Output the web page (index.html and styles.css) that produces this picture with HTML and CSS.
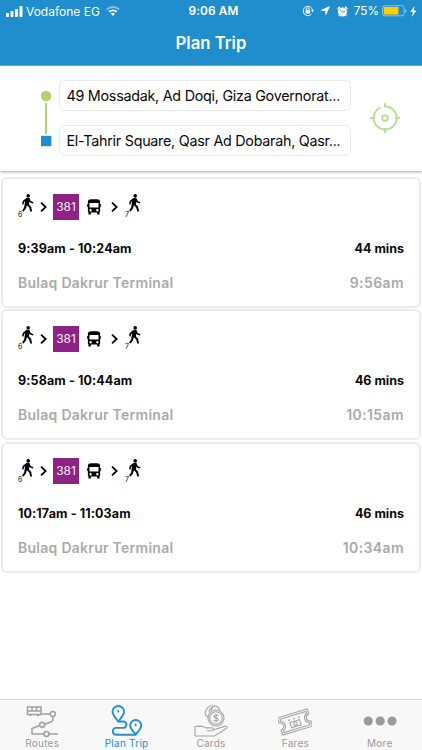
FILE: index.html
```
<!DOCTYPE html>
<html lang="en">
<head>
<meta charset="utf-8">
<title>Plan Trip</title>
<link rel="stylesheet" href="styles.css">
</head>
<body>
<svg class="defs" width="0" height="0">
  <symbol id="walk" viewBox="0 0 12 18">
    <circle cx="6.200" cy="1.900" r="1.800"/>
    <path d="M4.400 4.100h3L8.700 6.900l2.800 1.300-.6 1.400L7.500 8.200l-.3-.6-.2 3 2.100 2.100 1 4.900H8.200l-1-4.100-2.300-2.200-1 3.200L1.600 17.600.1 16.700l2.100-3.400.9-6-1 .8-.5 2.300-1.500-.2.6-3.300z"/>
  </symbol>
  <symbol id="chev" viewBox="0 0 7 10"><path d="M1 .7 5.700 5 1 9.300" fill="none" stroke="#000" stroke-width="1.700"/></symbol>
  <symbol id="bus" viewBox="0 0 14 16">
    <path fill-rule="evenodd" d="M2.800.6C5 0 9 0 11.200.6c1.300.3 1.900 1.100 1.900 2.200V5h.7v3h-.7v5h-.5v2a.5.500 0 0 1-.5.500h-1.500a.5.500 0 0 1-.5-.5v-1.500H3.900V15a.5.500 0 0 1-.5.500H1.900a.5.500 0 0 1-.5-.5v-2H.9V8H.2V5h.7V2.800C.9 1.700 1.500.9 2.800.6zM2.500 4v4.400h9V4zM3.600 10a1.200 1.200 0 1 0 0 2.400 1.200 1.200 0 0 0 0-2.400zM10.400 10a1.200 1.200 0 1 0 0 2.400 1.200 1.200 0 0 0 0-2.400z"/>
  </symbol>
</svg>

<header class="top">
  <div class="status">
    <div class="carrier">
      <svg width="17" height="11" viewBox="0 0 17 11" fill="#fff"><rect x="0" y="7" width="3" height="4" rx=".8"/><rect x="4.500" y="5" width="3" height="6" rx=".8"/><rect x="9" y="3" width="3" height="8" rx=".8"/><rect x="13.500" y="0" width="3" height="11" rx=".8"/></svg>
      <span class="carrier-name">Vodafone EG</span>
      <svg class="wifi" width="14" height="10" viewBox="0 0 14 10" fill="none" stroke="#fff" stroke-width="1.900"><path d="M.9 3.500a8.700 8.700 0 0 1 12.200 0" opacity=".45"/><path d="M3.200 5.900a5.400 5.400 0 0 1 7.600 0"/><path d="M4.800 7.600 7 10l2.200-2.400a3.400 3.400 0 0 0-4.400 0z" fill="#fff" stroke="none"/></svg>
    </div>
    <div class="clock">9:06 AM</div>
    <div class="indicators">
      <svg width="12" height="12" viewBox="0 0 12 12" fill="none" stroke="#fff"><path d="M9.300 9.300A4.700 4.700 0 1 1 10.600 5.500"/><path d="M8.900 5.200h3.100l-1.500 2z" fill="#fff" stroke="none"/><rect x="3.500" y="5.200" width="4.600" height="3.400" fill="#fff" stroke="none"/><path d="M4.400 5.300V4.200a1.400 1.400 0 0 1 2.800 0v1.100"/></svg>
      <svg class="loc" width="10" height="10" viewBox="0 0 10 10" fill="#fff"><path d="M10 0 5.700 9.800 5.200 5 0 4.500z"/></svg>
      <svg class="alarm" width="11" height="11" viewBox="0 0 11 11"><circle cx="5.500" cy="6" r="4.600" fill="#fff"/><path d="M.5 2.900 2.900.7M10.500 2.900 8.100.7M2.200 9.300 1.700 10M8.800 9.300l.5.700" stroke="#fff" stroke-width="1.300"/><path d="M3.500 4.200 5.500 6.200 8 5.400" fill="none" stroke="#208ecd"/></svg>
      <span class="percent">75%</span>
      <svg width="25" height="12" viewBox="0 0 26 12"><rect x=".5" y=".5" width="22.500" height="10.500" rx="2.200" fill="none" stroke="#8dc5e5"/><rect x="1.800" y="1.800" width="15.300" height="7.900" fill="#fc0"/><path d="M24.200 4v4q1.300-.5 1.300-2t-1.300-2z" fill="#8dc5e5"/></svg>
      <svg class="bolt" width="7" height="11" viewBox="0 0 7 11" fill="#fff"><path d="M4.400 0 .3 6h2.500l-1 5L6.400 4.500H3.800z"/></svg>
    </div>
  </div>
  <h1>Plan Trip</h1>
</header>

<section class="search">
  <svg class="route" width="12" height="76" viewBox="0 0 12 76"><circle cx="6" cy="16" r="5.200" fill="#afd469"/><path d="M6 23v31" stroke="#afd469" stroke-width="2"/><rect x="1" y="55.800" width="10.400" height="10.400" fill="#208ecd"/></svg>
  <div class="fields">
    <div class="field"><span class="from">49 Mossadak, Ad Doqi, Giza Governorat...</span></div>
    <div class="field"><span class="to">El-Tahrir Square, Qasr Ad Dobarah, Qasr...</span></div>
  </div>
  <svg class="target" width="32" height="32" viewBox="0 0 32 32" fill="none" stroke="#b5df91" stroke-width="1.900"><path d="M11.500 5.500A11.500 11.500 0 1 0 16 4.500"/><path d="M16 1v4.500M26 16h5M16 26v5M1 16h5"/><circle cx="16" cy="16" r="2.800"/></svg>
</section>

<main class="trips">
  <article class="trip">
    <div class="legs">
      <div class="walk"><span>6</span><svg width="12" height="18"><use href="#walk"/></svg></div>
      <svg class="chev" width="7" height="10"><use href="#chev"/></svg>
      <span class="line">381</span>
      <svg class="bus" width="14" height="16"><use href="#bus"/></svg>
      <svg class="chev2" width="7" height="10"><use href="#chev"/></svg>
      <div class="walk"><span>7</span><svg width="12" height="18"><use href="#walk"/></svg></div>
    </div>
    <div class="times"><span>9:39am - 10:24am</span><span class="duration">44 mins</span></div>
    <div class="stop"><span>Bulaq Dakrur Terminal</span><span class="arrival">9:56am</span></div>
  </article>
  <article class="trip">
    <div class="legs">
      <div class="walk"><span>6</span><svg width="12" height="18"><use href="#walk"/></svg></div>
      <svg class="chev" width="7" height="10"><use href="#chev"/></svg>
      <span class="line">381</span>
      <svg class="bus" width="14" height="16"><use href="#bus"/></svg>
      <svg class="chev2" width="7" height="10"><use href="#chev"/></svg>
      <div class="walk"><span>7</span><svg width="12" height="18"><use href="#walk"/></svg></div>
    </div>
    <div class="times"><span>9:58am - 10:44am</span><span class="duration">46 mins</span></div>
    <div class="stop"><span>Bulaq Dakrur Terminal</span><span class="arrival">10:15am</span></div>
  </article>
  <article class="trip">
    <div class="legs">
      <div class="walk"><span>6</span><svg width="12" height="18"><use href="#walk"/></svg></div>
      <svg class="chev" width="7" height="10"><use href="#chev"/></svg>
      <span class="line">381</span>
      <svg class="bus" width="14" height="16"><use href="#bus"/></svg>
      <svg class="chev2" width="7" height="10"><use href="#chev"/></svg>
      <div class="walk"><span>7</span><svg width="12" height="18"><use href="#walk"/></svg></div>
    </div>
    <div class="times"><span>10:17am - 11:03am</span><span class="duration">46 mins</span></div>
    <div class="stop"><span>Bulaq Dakrur Terminal</span><span class="arrival">10:34am</span></div>
  </article>
</main>

<nav class="tabs">
  <a class="tab">
    <svg width="34" height="34" viewBox="0 0 34 34" fill="none" stroke="#a0a0a0" stroke-width="1.500"><path d="M2.500 3h13.500v7.500H2.500zM2.500 7H16M7 3v4M11.500 3v4"/><path d="M5.500 10.500v1.500M13 10.500v1.500" stroke-width="2"/><path d="M16 10h9.300M27.800 12.500v4L26 18l-6.500 2.200M14.700 21.500 7 24.500V30h12M24 30h9"/><circle cx="27.800" cy="10" r="2.500"/><circle cx="17.200" cy="20.800" r="2.500"/><circle cx="21.500" cy="30" r="2.500"/></svg>
    <span>Routes</span>
  </a>
  <a class="tab active">
    <svg width="34" height="34" viewBox="0 0 34 34" fill="none" stroke="#238fcd" stroke-width="1.900"><path d="M8.300 17.500C5 13.500 2.500 10 2.500 7.800a5.800 5.800 0 0 1 11.600 0c0 2.200-2.500 5.700-5.800 9.700z"/><path d="M25.700 30.500c-3.300-3.700-5.600-6.700-5.600-8.900a5.600 5.600 0 0 1 11.200 0c0 2.200-2.300 5.200-5.600 8.900z"/><path d="M8.300 17.500h5a3.200 3.200 0 0 1 0 6.400H6.200a3.400 3.400 0 0 0 0 6.900h19.500"/><path d="M8.300 6v2.500M25.700 19.700v2.500" stroke-width="1.600"/></svg>
    <span>Plan Trip</span>
  </a>
  <a class="tab">
    <svg width="34" height="34" viewBox="0 0 34 34" fill="none" stroke="#a4a4a4" stroke-width="1.100"><circle cx="22" cy="14" r="8"/><circle cx="22" cy="14" r="6.300"/><path d="M13.800 13a5 5 0 0 1-.8-8.400 5 5 0 0 1 6.500-2.300 5 5 0 0 1 6.300 4.500M15.500 8.500a3 3 0 0 1 2-4.300M19.500 2.300a4.700 4.700 0 0 0-2.300 4.500"/><path d="M24.300 11.800c-.6-1-4.300-1.300-4.300.7s4.300 1 4.300 3-4 1.700-4.600.4M22.100 9.800v8.500"/><path d="M1 22.500l6-.4c2 0 3.500 1.800 5.500 1.800h5.300c2.500 0 2 2.900 0 2.900h-5M18.800 26l11.700-3.600c3-.8 3.300 1.300 1.300 2.300L20.500 32H1M1 22.500V32"/></svg>
    <span>Cards</span>
  </a>
  <a class="tab">
    <svg width="34" height="34" viewBox="0 0 34 34" fill="none" stroke="#a4a4a4" stroke-width="1.100"><g transform="rotate(-17 17 18)"><path d="M1.500 9h31v5.500a3.500 3.500 0 0 0 0 7V27h-31v-5.500a3.500 3.500 0 0 0 0-7z"/><path d="M3.500 11h27v2.300a5 5 0 0 0 0 9.400V25h-27v-2.300a5 5 0 0 0 0-9.400z"/><rect x="12" y="17" width="10" height="5.500"/><circle cx="17" cy="19.700" r="1.700"/><path d="M11 14.500h2M16 14.500h2M21 14.500h2"/></g></svg>
    <span>Fares</span>
  </a>
  <a class="tab">
    <svg width="34" height="34" viewBox="0 0 34 34" fill="#9b9b9b"><circle cx="5.200" cy="17" r="4.600"/><circle cx="17.200" cy="17" r="4.600"/><circle cx="29" cy="17" r="4.600"/></svg>
    <span>More</span>
  </a>
</nav>
</body>
</html>
```
FILE: styles.css
```
* { box-sizing: border-box; }
body {
  margin: 0;
  width: 422px;
  height: 750px;
  display: flex;
  flex-direction: column;
  overflow: hidden;
  background: #fff;
  font-family: Inter, "Liberation Sans", sans-serif;
  color: #080808;
}
svg { flex: none; display: block; }
.defs { height: 0; width: 0; }
.top {
  height: 66px;
  flex: none;
  background: #208ecd;
  border-bottom: 1px solid #70b5da;
  color: #fff;
}
.status {
  height: 22px;
  display: grid;
  grid-template-columns: 1fr auto 1fr;
  align-items: center;
  padding: 0 5px 0 6px;
  font-size: 12px;
  white-space: nowrap;
}
.carrier { display: flex; align-items: center; }
.carrier-name { margin-left: 3px; }
.wifi { margin-left: 6px; }
.clock { position: relative; left: 2px; font-weight: 600; font-size: 11.8px; letter-spacing: .1px; }
.indicators { display: flex; align-items: center; justify-content: flex-end; }
.loc { margin-left: 6px; }
.alarm { margin-left: 7px; }
.percent { margin: 0 3px 0 6px; font-size: 11.8px; }
.bolt { margin-left: 3px; }
h1 {
  margin: 10px 0 0;
  line-height: 22px;
  font-size: 16.7px;
  font-weight: 600;
  text-align: center;
}
.search {
  height: 105px;
  flex: none;
  display: flex;
  padding: 14px 0 0 40px;
  box-shadow: 0 1px 3px rgba(0, 0, 0, .35);
}
.fields { margin-left: 7px; display: grid; gap: 14px; align-content: start; }
.field {
  width: 292px;
  height: 31px;
  padding-left: 6.5px;
  border: 1px solid #e9e9e9;
  border-radius: 6px;
  font-size: 14.3px;
  line-height: 29px;
  letter-spacing: -.25px;
  white-space: nowrap;
}
.target { margin: 22px 0 0 18px; }
.trips {
  flex: 1;
  display: flex;
  flex-direction: column;
  gap: 1.4px;
  padding: 6px 1px 0;
}
.trip {
  height: 131px;
  flex: none;
  padding: 14px 15px 0;
  border: 2px solid #ebebeb;
  border-radius: 6px;
}
.legs { height: 27px; display: flex; align-items: center; }
.walk { width: 16px; height: 25px; display: flex; }
.walk span { width: 4px; flex: none; align-self: flex-end; font-size: 7px; line-height: 8px; }
.chev { margin-left: 6px; }
.line {
  width: 26px;
  height: 26px;
  margin-left: 6px;
  background: #8f2285;
  color: #f8e9f6;
  font-size: 12px;
  line-height: 26px;
  text-align: center;
}
.bus { margin-left: 8px; }
.chev2 { margin: 0 7px 0 10px; }
.times, .stop { display: flex; justify-content: space-between; }
.times { margin-top: 19px; font-size: 12.5px; font-weight: 700; line-height: 20px; letter-spacing: .12px; }
.duration { letter-spacing: 0; }
.stop { margin-top: 14px; font-size: 14px; font-weight: 600; line-height: 20px; letter-spacing: .27px; color: #aaa; }
.arrival { letter-spacing: .4px; }
.tabs {
  height: 51px;
  flex: none;
  display: grid;
  grid-template-columns: repeat(5, 1fr);
  background: #f8f8f8;
  border-top: 1px solid #d8d8d8;
}
.tab {
  display: flex;
  flex-direction: column;
  align-items: center;
  padding-top: 4px;
  font-size: 10px;
  line-height: 12px;
  letter-spacing: .25px;
  color: #999;
}
.tab span { margin-top: -1.500px; }
.active { color: #238fcd; }
```
